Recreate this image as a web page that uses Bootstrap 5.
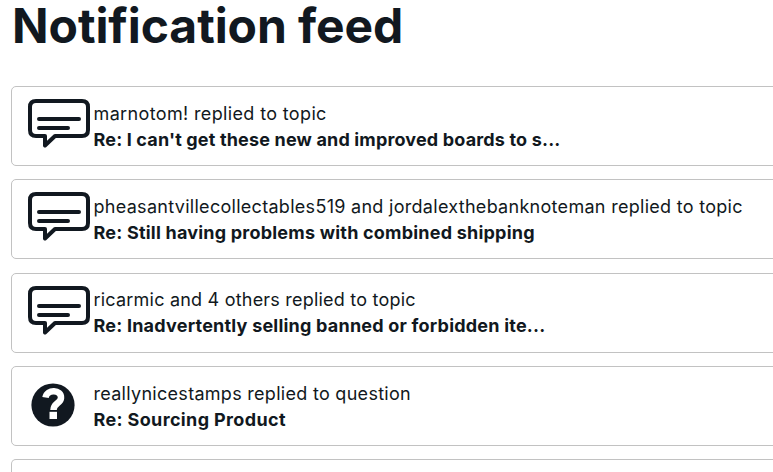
<!DOCTYPE html>
<html lang="en">
<head>
<meta charset="utf-8">
<meta name="viewport" content="width=device-width, initial-scale=1">
<title>Notification feed</title>
<link href="https://cdn.jsdelivr.net/npm/bootstrap@5.3.0/dist/css/bootstrap.min.css" rel="stylesheet">
<style>
body{font-family:Inter,"Liberation Sans",sans-serif;color:#111820;background:#fff;overflow:hidden;height:472px}
.feed-title{font-size:48px;line-height:52px;font-weight:700;letter-spacing:-.07px;margin:0 0 34px 12px;white-space:nowrap}
.feed-list{margin-left:11px;width:800px;gap:13.3px}
.feed-item{height:80px;flex:none;border:1px solid #c2c2c2;border-radius:5px;padding:0 0 0 15px}
.feed-item-next{height:12.800px;border-bottom:0;border-bottom-left-radius:0}
.feed-icon{width:66.500px;flex:none;padding-top:10px}
.feed-icon svg{display:block}
.feed-text{font-size:18px;line-height:26px;white-space:nowrap;padding-top:13.700px}
.feed-text strong{font-weight:700}
.ls-a{letter-spacing:.36px}
.ls-b{letter-spacing:.16px}
.ls-c{letter-spacing:.29px}
.ls-d{letter-spacing:.21px}
</style>
</head>
<body>
<svg class="d-none">
  <symbol id="speech" viewBox="0 0 66 54"><g fill="none" stroke="#111820" stroke-width="4" stroke-linecap="round" stroke-linejoin="round"><path d="M9 4H55Q61 4 61 10V33Q61 39 55 39H28L18 48.500V39H9Q3 39 3 33V10Q3 4 9 4Z"/><path d="M12 22H52M12 31H41"/></g></symbol>
  <symbol id="question" viewBox="0 0 66 54"><circle cx="26" cy="28" r="21.600" fill="#111820"/><path d="M18.500 20.500C20 11.500 34.500 12.500 34 21C33.700 26.500 26.500 26 26.500 33" fill="none" stroke="#fff" stroke-width="6.500"/><path d="M22.500 34.800H30V42H22.500Z" fill="#fff"/></symbol>
</svg>
<main>
<h1 class="feed-title">Notification feed</h1>
<div class="feed-list d-flex flex-column">
  <article class="feed-item d-flex"><div class="feed-icon"><svg width="66" height="54"><use href="#speech"/></svg></div><div class="feed-text"><div class="ls-a">marnotom! replied to topic</div><div class="ls-b"><strong>Re: I can't get these new and improved boards to s...</strong></div></div></article>
  <article class="feed-item d-flex"><div class="feed-icon"><svg width="66" height="54"><use href="#speech"/></svg></div><div class="feed-text"><div class="ls-c">pheasantvillecollectables519 and jordalexthebanknoteman replied to topic</div><div class="ls-d"><strong>Re: Still having problems with combined shipping</strong></div></div></article>
  <article class="feed-item d-flex"><div class="feed-icon"><svg width="66" height="54"><use href="#speech"/></svg></div><div class="feed-text"><div class="ls-d">ricarmic and 4 others replied to topic</div><div class="ls-d"><strong>Re: Inadvertently selling banned or forbidden ite...</strong></div></div></article>
  <article class="feed-item d-flex"><div class="feed-icon"><svg width="66" height="54"><use href="#question"/></svg></div><div class="feed-text"><div class="ls-c">reallynicestamps replied to question</div><div class="ls-a"><strong>Re: Sourcing Product</strong></div></div></article>
  <article class="feed-item feed-item-next"></article>
</div>
</main>
<script src="https://cdn.jsdelivr.net/npm/bootstrap@5.3.0/dist/js/bootstrap.bundle.min.js"></script>
</body>
</html>
